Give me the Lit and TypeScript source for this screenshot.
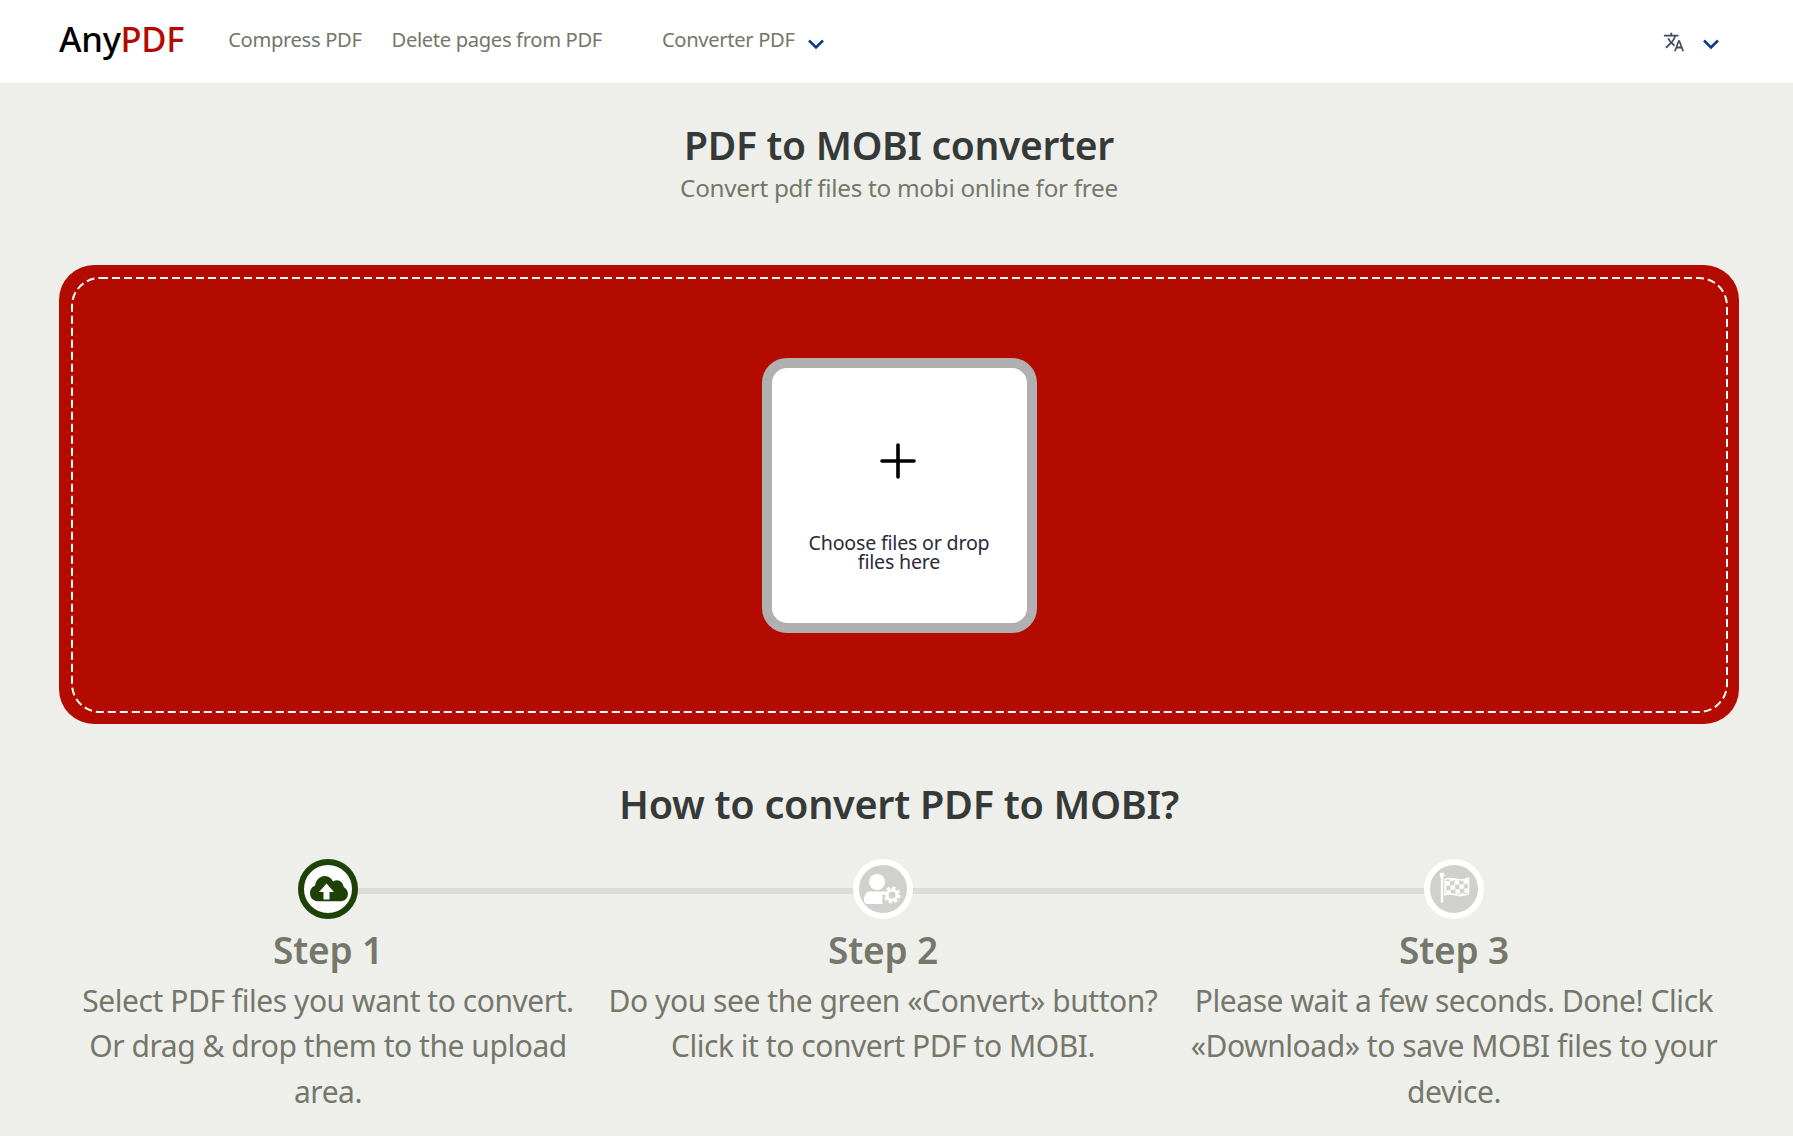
import { LitElement, html, css, svg } from "lit";
import { customElement } from "lit/decorators.js";

const chevron = html`<svg class="chev" viewBox="0 0 18 12" width="18" height="12"><path d="M2 2.5 9 9.5 16 2.5" fill="none" stroke="#0b3a8a" stroke-width="2.6"/></svg>`;

const cloud = svg`<path fill="#1d4106" transform="matrix(1.086 0 0 1.2 -0.5 -3.4)" d="M13 33c-4.200 0-7-3-7-6.600 0-3 1.900-5.400 4.600-6.200C11.200 15.500 15 12 19.600 12c3.300 0 6.200 1.800 7.700 4.500 1-.7 2.200-1 3.400-1 3.300 0 6 2.500 6.300 5.700 2.300 1 3.900 3.100 3.900 5.600 0 3.400-2.800 6.200-6.400 6.200z"/><path fill="#fff" d="M22.500 18.500 30 27h-4.500v7.500h-6V27H15z"/>`;

const userCog = svg`<circle cx="18" cy="17" r="8" fill="#fff"/><path fill="#fff" d="M10 26.500h14.800c1.200 0 1.800.3 2.100.7-1.300 1.200-2.600 2-3.600 2.700v7.600c0 .5.200 1 .5 1.500H8.500C6.600 39 5 37.400 5 35.500v-.2c0-5 2.500-8.800 5-8.800z"/><circle cx="33" cy="30" r="5" fill="none" stroke="#fff" stroke-width="3"/><circle cx="33" cy="30" r="7" fill="none" stroke="#fff" stroke-width="3" stroke-dasharray="3.200 2.300"/>`;

const flag = svg`<defs><pattern id="chk" width="9" height="9" patternUnits="userSpaceOnUse" patternTransform="rotate(-6)"><rect width="9" height="9" fill="#fff"/><rect width="4.500" height="4.500" fill="#d0d0cc"/><rect x="4.500" y="4.500" width="4.500" height="4.500" fill="#d0d0cc"/></pattern></defs><circle cx="12" cy="10" r="2.400" fill="#fff"/><rect x="10.800" y="10" width="2.400" height="27.500" fill="#fff"/><path fill="url(#chk)" stroke="#fff" stroke-width="1.500" d="M15 14.500c5-2.400 9.500-.4 13 .3 3.500.6 7.500-.2 10.500-1.500v15.500c-3 1.500-7 2.100-10.500 1.400-4.500-.9-8.500-2.500-13-.3z"/>`;

const steps = [
  { title: "Step 1", active: true, icon: cloud, text: ["Select PDF files you want to convert.", "Or drag & drop them to the upload", "area."] },
  { title: "Step 2", active: false, icon: userCog, text: ["Do you see the green «Convert» button?", "Click it to convert PDF to MOBI."] },
  { title: "Step 3", active: false, icon: flag, text: ["Please wait a few seconds. Done! Click", "«Download» to save MOBI files to your", "device."] },
];

@customElement("app-root")
export class AppRoot extends LitElement {
  static styles = css`
    :host {
      display: block;
      height: 1136px;
      overflow: hidden;
      background: #eeefeb;
      font-family: "Noto Sans", "Open Sans", sans-serif;
      color: #74776a;
    }
    header {
      height: 83px;
      background: #fff;
      display: flex;
      align-items: center;
      padding: 0 59px;
      font-size: 20.200px;
      letter-spacing: -0.35px;
    }
    .logo { font-size: 34.500px; font-weight: 500; color: #000; letter-spacing: -0.3px; margin-right: 44px; margin-top: -5px; line-height: 44px; }
    .logo span { color: #b30b00; }
    .nav { margin-right: 30px; margin-top: -5px; }
    .nav.conv { margin-left: 30px; margin-right: 12px; }
    .chev { margin-top: 4px; }
    .lang { margin-left: auto; margin-right: 14px; display: flex; align-items: center; gap: 17px; }
    .tr { width: 22px; height: 22px; }
    main { padding: 0 54px 0 59px; }
    .titles { text-align: center; padding-top: 35px; }
    h1, h2 { margin: 0; font-weight: 600; color: #353a38; line-height: 54px; }
    h1 { font-size: 39px; letter-spacing: -0.3px; }
    h2 { font-size: 39.600px; letter-spacing: -0.3px; text-align: center; margin-top: 53px; }
    .sub { font-size: 24.300px; line-height: 32px; letter-spacing: -0.3px; }
    .drop {
      margin-top: 61px;
      height: 459px;
      box-sizing: border-box;
      background: #b30b00;
      border-radius: 35px;
      padding: 12px 11px 10px;
      position: relative;
      display: flex;
      align-items: center;
      justify-content: center;
    }
    .dash { position: absolute; left: 12px; top: 12px; }
    .card {
      width: 275px;
      height: 275px;
      box-sizing: border-box;
      border: 10px solid #b0b0b0;
      border-radius: 25px;
      background: #fff;
      display: flex;
      flex-direction: column;
      align-items: center;
      text-align: center;
      color: #2b2b3a;
      font-size: 19.600px;
      line-height: 19px;
      letter-spacing: -0.2px;
    }
    .plus { margin-top: 75px; margin-right: 2px; }
    .card p { margin: 54px 0 0; }
    .steps {
      display: grid;
      grid-template-columns: 538px 572px 1fr;
      margin-top: 28px;
      text-align: center;
      position: relative;
    }
    .line { position: absolute; left: 290px; right: 300px; top: 29px; height: 6px; background: #dcdcda; }
    .step { position: relative; display: flex; flex-direction: column; align-items: center; }
    .icon {
      width: 60px; height: 60px; box-sizing: border-box;
      border-radius: 50%;
      border: 6px solid #fff;
      background: #d0d0cc;
    }
    .icon.active { border-color: #1d4106; background: #fff; }
    .icon svg { display: block; width: 48px; height: 48px; }
    h3 { margin: 7px 0 0; font-size: 37px; line-height: 48px; font-weight: 600; color: #74776a; letter-spacing: -0.2px; }
    .step p { margin: 4px 0 0; font-size: 30px; line-height: 45.300px; white-space: nowrap; letter-spacing: -0.45px; }
  `;

  render() {
    return html`
      <header>
        <div class="logo">Any<span>PDF</span></div>
        <div class="nav">Compress PDF</div>
        <div class="nav">Delete pages from PDF</div>
        <div class="nav conv">Converter PDF</div>
        ${chevron}
        <div class="lang">
          <svg class="tr" viewBox="0 0 24 24"><path fill="#434b5e" d="M12.870 15.070l-2.540-2.510.03-.03c1.740-1.940 2.980-4.170 3.710-6.530H17V4h-7V2H8v2H1v1.990h11.170C11.500 7.920 10.440 9.750 9 11.350 8.070 10.320 7.300 9.190 6.690 8h-2c.73 1.630 1.730 3.170 2.980 4.560l-5.090 5.020L4 19l5-5 3.110 3.110.76-2.040zM18.500 10h-2L12 22h2l1.120-3h4.750L21 22h2l-4.500-12zm-2.620 7l1.620-4.330L19.120 17h-3.240z"/></svg>
          ${chevron}
        </div>
      </header>
      <main>
        <div class="titles">
          <h1>PDF to MOBI converter</h1>
          <div class="sub">Convert pdf files to mobi online for free</div>
        </div>
        <div class="drop">
          <svg class="dash" width="1657" height="436" viewBox="0 0 1657 436"><rect x="1" y="1" width="1655" height="434" rx="28" fill="none" stroke="#fff" stroke-width="2" stroke-dasharray="8 4"/></svg>
          <div class="card">
            <svg class="plus" width="36" height="36" viewBox="0 0 36 36"><path d="M18 2V34M2 18H34" stroke="#000" stroke-width="3.600" stroke-linecap="round"/></svg>
            <p>Choose files or drop<br />files here</p>
          </div>
        </div>
        <h2>How to convert PDF to MOBI?</h2>
        <div class="steps">
          <div class="line"></div>
          ${steps.map(
            (s) => html`
              <div class="step">
                <div class="icon ${s.active ? "active" : ""}"><svg viewBox="0 0 48 48">${s.icon}</svg></div>
                <h3>${s.title}</h3>
                <p>${s.text.map((t) => html`${t}<br />`)}</p>
              </div>
            `
          )}
        </div>
      </main>
    `;
  }
}
